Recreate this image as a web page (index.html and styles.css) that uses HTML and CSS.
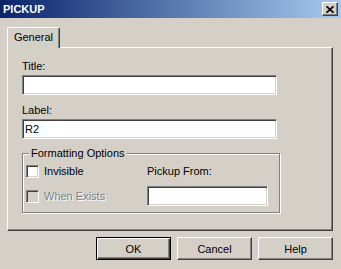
FILE: index.html
```html
<!DOCTYPE html>
<html lang="en">
<head>
  <meta charset="UTF-8">
  <title>PICKUP</title>
  <link rel="stylesheet" href="styles.css">
</head>
<body>
  <div class="window">
    <div class="titlebar">
      <span class="title">PICKUP</span>
      <button class="close" title="Close">
        <svg width="8" height="7" viewBox="0 0 8 7">
          <path d="M0.5 0.3 L7.5 6.7 M7.5 0.3 L0.5 6.7" stroke="#000" stroke-width="1.7" fill="none" />
        </svg>
      </button>
    </div>
    <div class="content">
      <div class="tabs">
        <div class="tab active">General</div>
      </div>
      <div class="panel">
        <label class="field">
          <span>Title:</span>
          <input class="edit" type="text" value="">
        </label>
        <label class="field">
          <span>Label:</span>
          <input class="edit" type="text" value="R2">
        </label>
        <fieldset class="group">
          <legend>Formatting Options</legend>
          <div class="group-cols">
            <div class="checks">
              <label class="check"><span class="box"></span>Invisible</label>
              <label class="check disabled"><span class="box"></span>When Exists</label>
            </div>
            <div class="pickup">
              <span>Pickup From:</span>
              <input class="edit small" type="text" value="">
            </div>
          </div>
        </fieldset>
      </div>
      <div class="actions">
        <button class="btn default">OK</button>
        <button class="btn">Cancel</button>
        <button class="btn">Help</button>
      </div>
    </div>
  </div>
</body>
</html>
```

FILE: styles.css
```css
* {
  box-sizing: border-box;
}

body {
  margin: 0;
  font-family: "Liberation Sans", Arial, sans-serif;
  font-size: 11px;
  color: #000;
  background: #d4d0c8;
}

.window {
  width: 341px;
  height: 269px;
  background: #d4d0c8;
  overflow: hidden;
}

.titlebar {
  height: 18px;
  display: flex;
  align-items: center;
  justify-content: space-between;
  padding: 0 3px;
  background: linear-gradient(to right, #0a246a, #a6caf0);
}

.title {
  color: #fff;
  font-weight: bold;
  font-size: 11px;
}

.close {
  width: 16px;
  height: 14px;
  padding: 0;
  margin: 0;
  display: flex;
  align-items: center;
  justify-content: center;
  background: #d4d0c8;
  border: 1px solid;
  border-color: #fff #404040 #404040 #fff;
  box-shadow: inset -1px -1px #808080;
}

.content {
  padding-top: 9px;
}

.tabs {
  display: flex;
  margin-left: 7px;
}

.tab {
  position: relative;
  z-index: 1;
  width: 53px;
  height: 21px;
  margin-bottom: -1px;
  padding-top: 3px;
  text-align: center;
  line-height: 13px;
  background: #d4d0c8;
  border: 1px solid;
  border-bottom: none;
  border-color: #fff #404040 #fff #fff;
  border-radius: 2px 2px 0 0;
  box-shadow: inset -1px 0 #808080;
}

.panel {
  width: 326px;
  height: 184px;
  margin-left: 7px;
  padding: 12px 0 0 14px;
  border: 1px solid;
  border-color: #fff #404040 #404040 #fff;
  box-shadow: inset -1px -1px #808080;
}

.field {
  display: flex;
  flex-direction: column;
  gap: 2px;
  line-height: 13px;
  margin-bottom: 9px;
}

.edit {
  display: block;
  width: 255px;
  height: 20px;
  margin: 0;
  padding: 0 2px;
  font: inherit;
  color: #000;
  background: #fff;
  border: 1px solid;
  border-color: #808080 #fff #fff #808080;
  box-shadow: inset 1px 1px #404040, inset -1px -1px #d4d0c8;
  outline: none;
}

.edit.small {
  width: 121px;
  margin-top: 8px;
}

.group {
  width: 258px;
  margin: -1px 0 0 0;
  padding: 5px 0 6px 3px;
  min-inline-size: 0;
  border: 1px solid #808080;
  box-shadow: inset 1px 1px #fff, 1px 1px #fff;
}

.group legend {
  margin-left: 3px;
  padding: 0 2px;
  line-height: 13px;
  background: #d4d0c8;
}

.group-cols {
  display: flex;
}

.checks {
  width: 121px;
  display: flex;
  flex-direction: column;
  gap: 12px;
}

.check {
  display: flex;
  align-items: center;
  gap: 5px;
  height: 13px;
  line-height: 13px;
}

.box {
  width: 13px;
  height: 13px;
  background: #fff;
  border: 1px solid;
  border-color: #808080 #fff #fff #808080;
  box-shadow: inset 1px 1px #404040, inset -1px -1px #d4d0c8;
}

.check.disabled {
  color: #808080;
  text-shadow: 1px 1px #fff;
}

.check.disabled .box {
  background: #d4d0c8;
}

.pickup {
  display: flex;
  flex-direction: column;
  line-height: 13px;
}

.actions {
  display: flex;
  justify-content: flex-end;
  gap: 6px;
  margin-top: 6px;
  padding-right: 8px;
}

.btn {
  width: 75px;
  height: 23px;
  margin: 0;
  padding: 0;
  font: inherit;
  color: #000;
  background: #d4d0c8;
  border: 1px solid;
  border-color: #fff #404040 #404040 #fff;
  box-shadow: inset -1px -1px #808080;
}

.btn.default {
  border-color: #000;
  box-shadow: inset 1px 1px #fff, inset -1px -1px #404040, inset -2px -2px #808080;
}
```
